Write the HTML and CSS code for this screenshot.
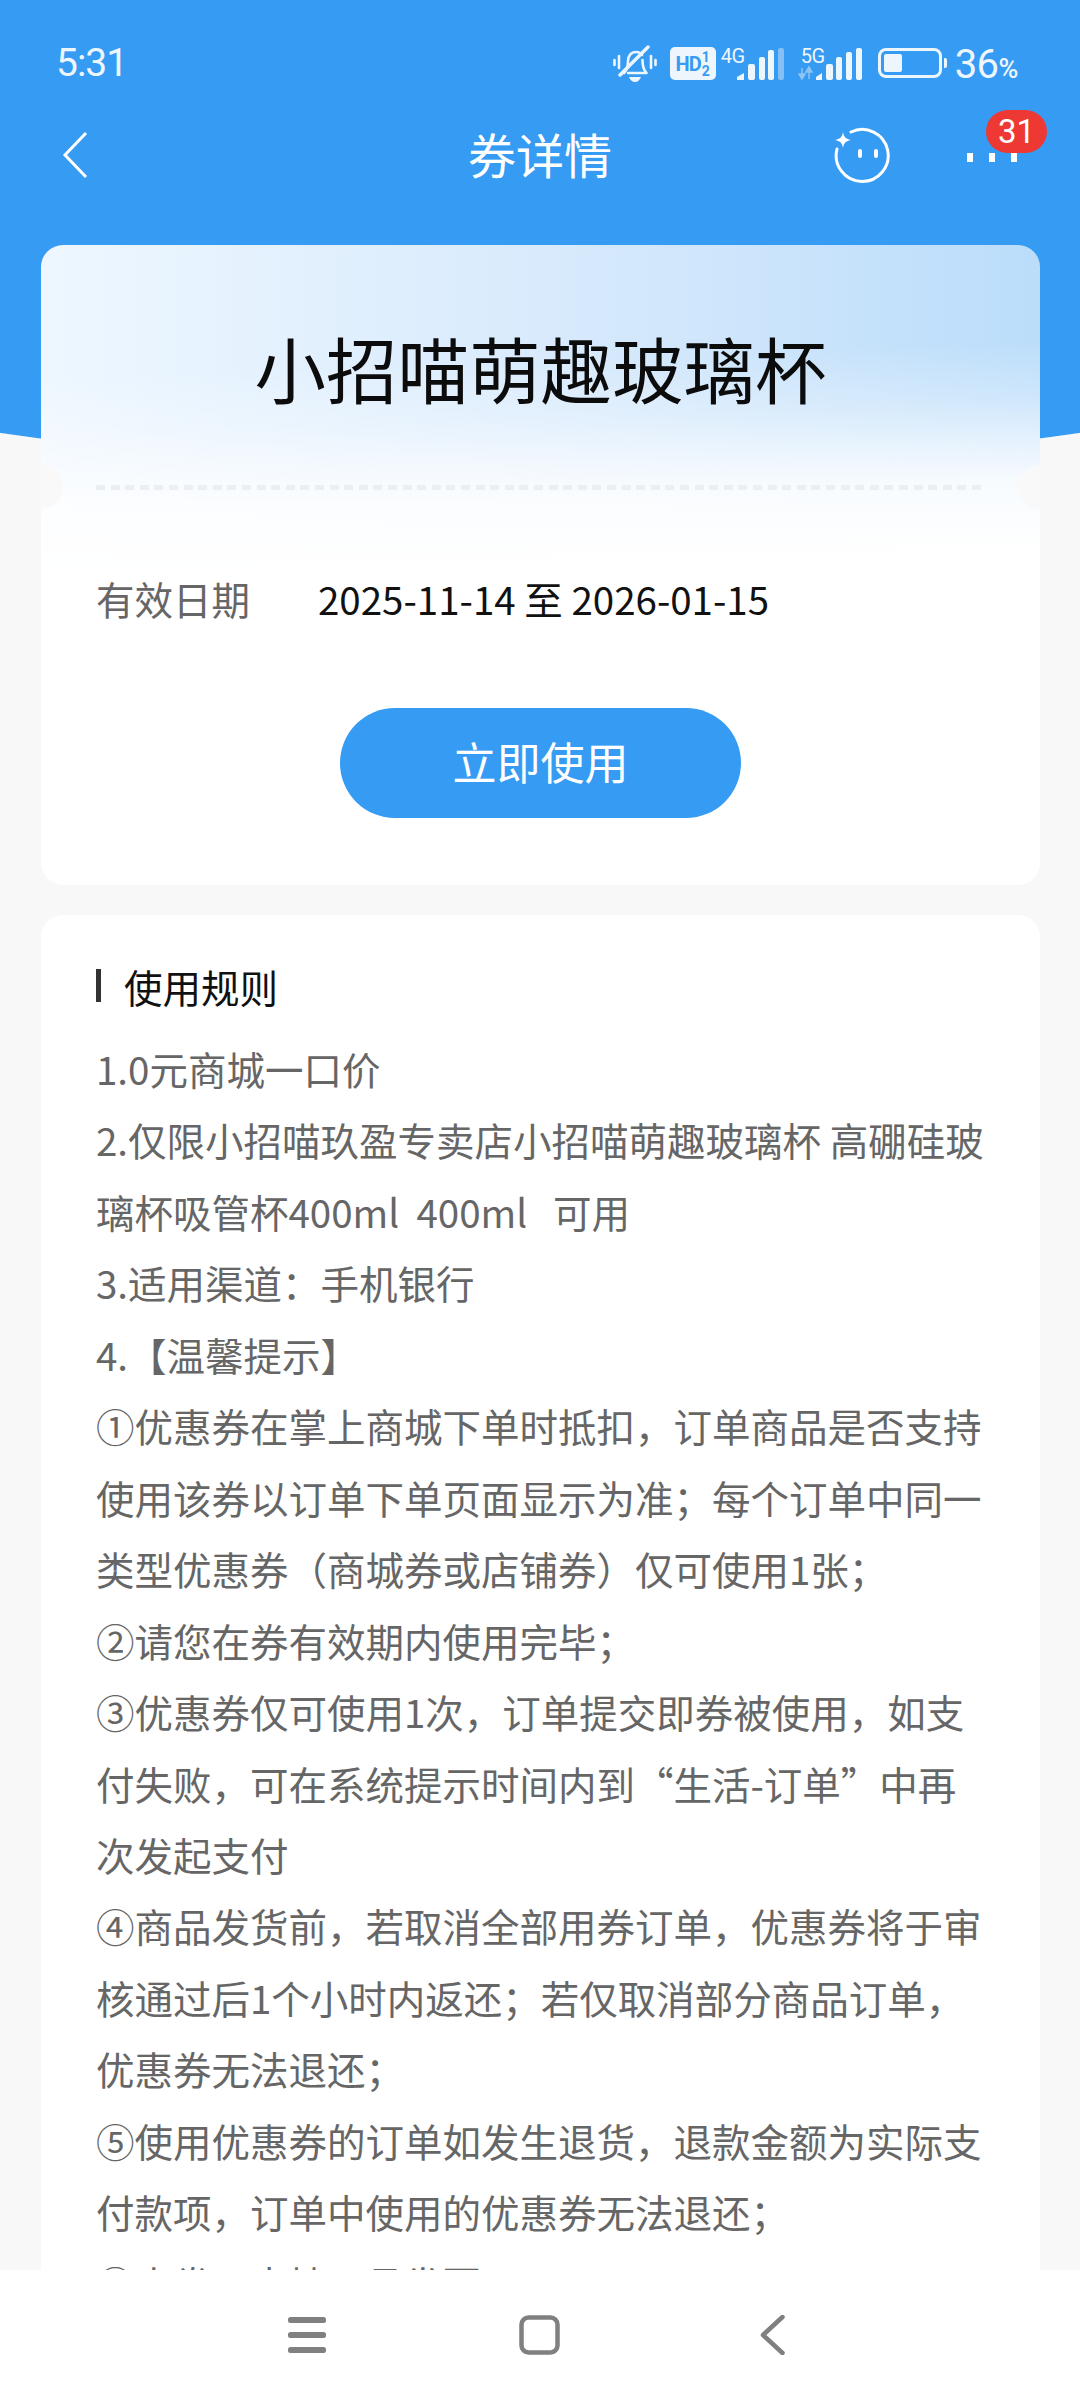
FILE: index.html
```html
<!DOCTYPE html>
<html lang="zh">
<head>
<meta charset="utf-8">
<title>券详情</title>
<link rel="stylesheet" href="styles.css">
</head>
<body>
<div class="page">
  <div class="hero-bg"></div>
  <div class="status">
    <span class="time">5:31</span>
    <div class="status-icons">
      <svg class="i-bell" viewBox="0 0 44 38" width="44" height="38"><g fill="none" stroke="#eef6fd" stroke-width="2.600" stroke-linecap="round" stroke-linejoin="round"><path d="M1.500 15v5M6 11v12M38 11v12M42.500 15v5"/><path d="M11 28c3-3 4-7 4-12 0-5 3-9 8-9 3 0 5 1 6 3M29.500 15c0 6 1 10 4 13H15"/><path d="M7 30 35 2" stroke-width="3.400"/></g><path d="M16 32h12q-2 5-6 5t-6-5z" fill="#eef6fd"/></svg>
      <span class="hd"><b>HD</b><span class="hd-frac"><i>1</i><i>2</i></span></span>
      <div class="net"><span class="net-label">4G</span><svg viewBox="0 0 48 32" width="48" height="32"><g fill="#eef6fd"><path d="M0 32v-3l7-4v7z"/><rect x="11" y="16" width="7" height="16" rx="2"/><rect x="22" y="9" width="6" height="23" rx="2"/><rect x="31" y="2" width="6" height="30" rx="2"/></g><rect x="41" y="0" width="6" height="32" rx="2" fill="#86bff3"/></svg></div>
      <div class="net net5"><span class="net-label">5G</span><svg viewBox="0 0 66 32" width="66" height="32"><path d="M4 20v7M4 31l-3-5h6zM11 31v-7M11 19l-3 5h6z" stroke="#8fc4f4" stroke-width="1.500" fill="#8fc4f4"/><g fill="#eef6fd"><path d="M18 32v-3l6-4v7z"/><rect x="28" y="16" width="7" height="16" rx="2"/><rect x="38" y="9" width="6" height="23" rx="2"/><rect x="48" y="4" width="6" height="28" rx="2"/><rect x="58" y="0" width="6" height="32" rx="2"/></g></svg></div>
      <div class="battery"><span class="battery-body"><span class="battery-fill"></span></span><span class="battery-tip"></span></div>
      <span class="pct">36<small>%</small></span>
    </div>
  </div>
  <div class="nav">
    <svg class="back" viewBox="0 0 26 48" width="26" height="48"><path d="M24 2 3 24l21 22" fill="none" stroke="#fff" stroke-width="3"/></svg>
    <h1 class="nav-title">券详情</h1>
    <svg class="face" viewBox="0 0 60 60" width="60" height="60"><path d="M19 5A26 26 0 1 1 5 22" fill="none" stroke="#fff" stroke-width="3" stroke-linecap="round"/><path d="M11 5c1 5 2 6.500 8 8-6 1.500-7 3-8 8-1-5-2-6.500-8-8 6-1.500 7-3 8-8z" fill="#fff"/><rect x="26" y="22" width="4" height="9" rx="2" fill="#fff"/><rect x="42" y="22" width="4" height="9" rx="2" fill="#fff"/></svg>
    <div class="more">
      <span class="dot"></span><span class="dot"></span><span class="dot"></span>
      <span class="badge">31</span>
    </div>
  </div>
  <main class="content">
    <section class="card coupon">
      <h2 class="coupon-title">小招喵萌趣玻璃杯</h2>
      <div class="divider"></div>
      <div class="date-row"><span class="date-label">有效日期</span><span class="date-value">2025-11-14 至 2026-01-15</span></div>
      <button class="use-btn">立即使用</button>
    </section>
    <section class="card rules">
      <h3 class="rules-title">使用规则</h3>
      <div class="rules-body">
        <p>1.0元商城一口价</p>
        <p>2.仅限小招喵玖盈专卖店小招喵萌趣玻璃杯 高硼硅玻璃杯吸管杯400ml&nbsp; 400ml &nbsp; 可用</p>
        <p>3.适用渠道：手机银行</p>
        <p>4.【温馨提示】</p>
        <p>①优惠券在掌上商城下单时抵扣，订单商品是否支持使用该券以订单下单页面显示为准；每个订单中同一类型优惠券（商城券或店铺券）仅可使用1张；</p>
        <p>②请您在券有效期内使用完毕；</p>
        <p>③优惠券仅可使用1次，订单提交即券被使用，如支付失败，可在系统提示时间内到“生活-订单”中再次发起支付</p>
        <p>④商品发货前，若取消全部用券订单，优惠券将于审核通过后1个小时内返还；若仅取消部分商品订单，优惠券无法退还；</p>
        <p>⑤使用优惠券的订单如发生退货，退款金额为实际支付款项，订单中使用的优惠券无法退还；</p>
        <p>⑥本券不支持开具发票</p>
      </div>
    </section>
  </main>
  <div class="sysnav">
    <svg viewBox="0 0 38 36" width="38" height="36"><g fill="#808080"><rect y="0" width="38" height="6" rx="2.500"/><rect y="15" width="38" height="6" rx="2.500"/><rect y="30" width="38" height="6" rx="2.500"/></g></svg>
    <svg viewBox="0 0 41 40" width="41" height="40"><rect x="2.500" y="2.500" width="36" height="35" rx="7" fill="none" stroke="#808080" stroke-width="4.500"/></svg>
    <svg viewBox="0 0 25 40" width="25" height="40"><path d="M22.500 2 3 20l19.500 18" fill="none" stroke="#808080" stroke-width="4.500" stroke-linecap="round" stroke-linejoin="round"/></svg>
  </div>
</div>
</body>
</html>
```
FILE: styles.css
```css
* { box-sizing: border-box; margin: 0; padding: 0; }
html, body { width: 1080px; height: 2400px; overflow: hidden; }
body { background: #f8f8f8; font-family: "Noto Sans CJK SC", "Noto Sans", sans-serif; }
.page { position: relative; width: 1080px; height: 2400px; display: flex; flex-direction: column; overflow: hidden; }
.hero-bg { position: absolute; left: -1060px; top: -829px; width: 3200px; height: 1300px; background: #369bf2; border-radius: 50%; }

.status { position: relative; height: 100px; padding: 26px 62px 0 56px; display: flex; justify-content: space-between; align-items: flex-start; color: #eef6fd; }
.time { font-family: Roboto, sans-serif; font-size: 39px; line-height: 74px; height: 74px; letter-spacing: -1px; }
.status-icons { display: flex; align-items: flex-end; height: 54px; }
.i-bell { margin-right: 13px; margin-bottom: -3px; }
.hd { width: 46px; height: 33px; background: #eef6fd; border-radius: 5px; color: #369bf2; display: flex; align-items: center; justify-content: center; font-family: Roboto, sans-serif; margin-right: 5px; }
.hd b { font-size: 20px; letter-spacing: -1px; }
.hd-frac { display: flex; flex-direction: column; margin-left: 1px; font-size: 14px; line-height: 14px; font-weight: 700; }
.hd-frac i { font-style: normal; }
.net { position: relative; display: flex; align-items: flex-end; padding-left: 16px; margin-right: 13px; }
.net-label { position: absolute; left: 0; top: -2px; font-family: Roboto, sans-serif; font-size: 20px; line-height: 20px; letter-spacing: -.5px; }
.net5 { padding-left: 0; margin-right: 14px; }
.net5 .net-label { left: 3px; }
.battery { display: flex; align-items: center; margin-bottom: 2px; }
.battery-body { width: 64px; height: 30px; border: 3px solid #eef6fd; border-radius: 8px; padding: 3px; display: flex; }
.battery-fill { width: 18px; background: #eef6fd; border-radius: 2px; }
.battery-tip { width: 3px; height: 10px; background: #eef6fd; margin-left: 2px; border-radius: 0 2px 2px 0; }
.pct { font-family: Roboto, sans-serif; font-size: 40px; line-height: 34px; margin-left: 8px; margin-bottom: -6px; letter-spacing: -.5px; }
.pct small { font-size: 27px; font-weight: 500; }

.nav { position: relative; height: 110px; display: flex; align-items: center; padding: 0 58px 0 62px; }
.back { flex: none; }
.nav-title { position: absolute; left: 0; right: 0; top: 15px; text-align: center; color: #fff; font-weight: 400; font-size: 48px; line-height: 76px; }
.face { position: absolute; left: 832px; top: 27px; }
.more { position: absolute; left: 967px; top: 53px; display: flex; gap: 16px; }
.dot { width: 6px; height: 9px; background: #fff; display: block; }
.badge { position: absolute; left: 19px; top: -43px; width: 61px; height: 43px; border-radius: 22px; background: #ee3833; color: #fff; font-family: Roboto, sans-serif; font-size: 33px; line-height: 43px; text-align: center; }

.content { position: relative; flex: 1; min-height: 0; overflow: hidden; padding: 35px 40px 0 41px; display: flex; flex-direction: column; gap: 30px; }
.card { background: #fff; border-radius: 22px; flex: none; }
.coupon { position: relative; height: 640px; overflow: hidden; padding: 0 55px; display: flex; flex-direction: column; align-items: center; background: linear-gradient(178deg, rgba(255,255,255,0) 130px, rgba(255,255,255,.3) 190px, rgba(255,255,255,.65) 235px, rgba(255,255,255,.88) 270px, #fff 340px), linear-gradient(90deg, #eef7ff 0, #d6e9fc 55%, #bbddfa 100%); }
.coupon::before, .coupon::after { content: ""; position: absolute; top: 220px; width: 44px; height: 44px; border-radius: 50%; background: #f9f9f9; }
.coupon::before { left: -22px; }
.coupon::after { right: -22px; }
.coupon-title { font-weight: 400; font-size: 71.500px; line-height: 100px; color: #0c0c0c; margin-top: 72px; }
.divider { width: 100%; height: 5px; background: repeating-linear-gradient(90deg, #eceff2 0, #eceff2 9px, transparent 9px, transparent 14.600px); margin-top: 68px; }
.date-row { align-self: stretch; display: flex; font-size: 38.500px; line-height: 56px; color: #666; margin-top: 80px; }
.date-label { width: 222px; flex: none; }
.date-value { color: #111; }
.use-btn { border: 0; width: 401px; height: 110px; border-radius: 55px; background: #369bf2; color: #fff; font: inherit; font-size: 44px; margin-top: 82px; padding-bottom: 5px; }

.rules { padding: 43px 55px 0; }
.rules-title { font-weight: 400; font-size: 38.500px; line-height: 56px; color: #111; padding-left: 28px; position: relative; }
.rules-title::before { content: ""; position: absolute; left: 0; top: 11px; width: 5px; height: 33px; background: #333; }
.rules-body { margin-top: 19px; font-size: 38.500px; line-height: 71.450px; color: #666; }
.rules-body p { width: 892px; }

.sysnav { position: relative; flex: none; height: 130px; background: #fff; display: flex; align-items: center; padding-left: 288px; }
.sysnav svg:nth-child(1) { margin-right: 193px; }
.sysnav svg:nth-child(2) { margin-right: 200px; }
```
